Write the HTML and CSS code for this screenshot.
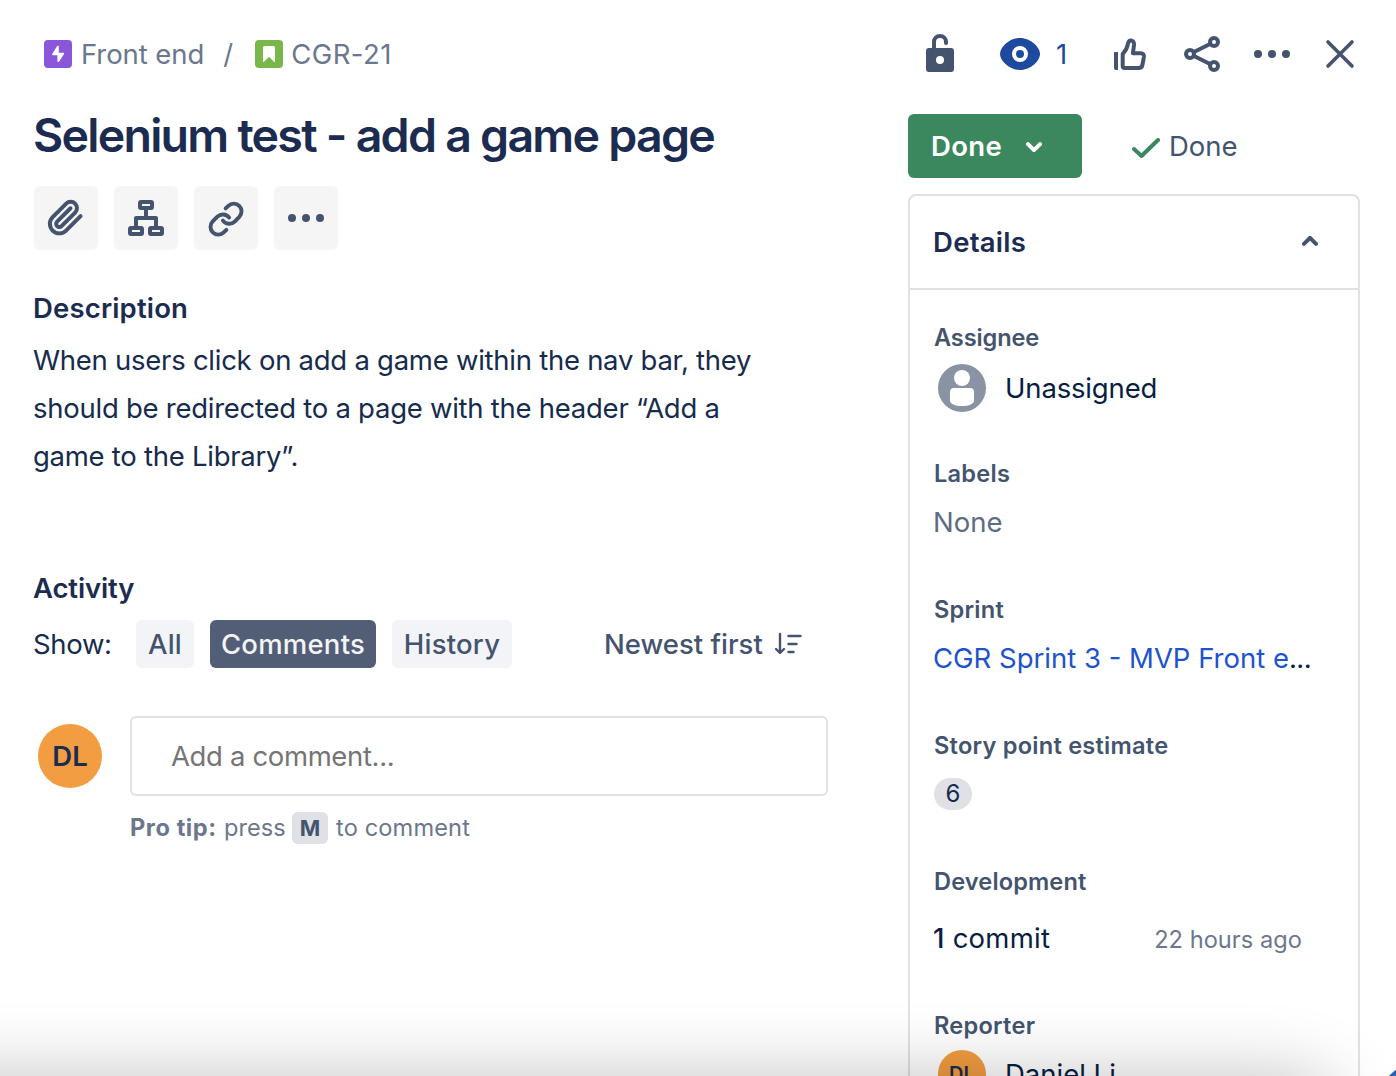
FILE: index.html
```html
<!DOCTYPE html>
<html lang="en">
<head>
<meta charset="utf-8">
<title>CGR-21 Selenium test - add a game page</title>
<link rel="stylesheet" href="styles.css">
</head>
<body>
<div class="issue">
  <main class="main">
    <nav class="crumbs">
      <svg class="type" viewBox="0 0 28 28"><rect width="28" height="28" rx="4" fill="#8a57da"/><path d="M14.8 6.6v6.2h4.6c.7 0 .9.5.6 1.100l-4.800 7.700c-.5.800-1.800.600-1.800-.500V15.200H8.800c-.7 0-.9-.5-.6-1.100L13 6.300c.5-.8 1.800-.6 1.800.3z" fill="#fff"/></svg>
      <a class="t-crumb">Front end</a>
      <span class="slash">/</span>
      <svg class="type" viewBox="0 0 28 28"><rect width="28" height="28" rx="4" fill="#79b74b"/><path d="M9.500 6h9A1.500 1.500 0 0 1 20 7.500V21.500c0 .6-.6.700-1 .300l-5-5-5 5c-.4.400-1 .3-1-.3V7.500A1.500 1.500 0 0 1 9.500 6z" fill="#fff"/></svg>
      <a class="t-key">CGR-21</a>
    </nav>
    <h1>Selenium test - add a game page</h1>
    <div class="tools">
      <button><svg viewBox="0 0 64 64"><path transform="translate(12.700 12.600) scale(1.58)" stroke-width="2.500" d="m21.440 11.050-9.190 9.190a6 6 0 0 1-8.490-8.490l8.570-8.570A4 4 0 1 1 18 8.840l-8.590 8.570a2 2 0 0 1-2.830-2.830l8.490-8.480"/></svg></button>
      <button><svg viewBox="0 0 64 64"><rect x="26" y="16" width="12" height="6" rx="1"/><rect x="16" y="42" width="12" height="6" rx="1"/><rect x="36" y="42" width="12" height="6" rx="1"/><path d="M32 23v9M22 42V32h20v10" stroke-linecap="butt"/></svg></button>
      <button><svg viewBox="0 0 64 64"><path transform="translate(13.300 14.400) scale(1.56)" stroke-width="2.500" d="M10 13a5 5 0 0 0 7.540.540l3-3a5 5 0 0 0-7.070-7.070l-1.720 1.710M14 11a5 5 0 0 0-7.540-.540l-3 3a5 5 0 0 0 7.070 7.070l1.710-1.710"/></svg></button>
      <button><svg viewBox="0 0 64 64"><g class="solid"><circle cx="18" cy="32" r="4"/><circle cx="32" cy="32" r="4"/><circle cx="46" cy="32" r="4"/></g></svg></button>
    </div>
    <h2 class="t-desc">Description</h2>
    <p class="body">When users click on add a game within the nav bar, they<br>should be redirected to a page with the header “Add a<br>game to the Library”.</p>
    <h2 class="t-act">Activity</h2>
    <div class="filters">
      <span class="show">Show:</span>
      <button class="pill p-all">All</button>
      <button class="pill p-com on">Comments</button>
      <button class="pill p-his">History</button>
      <button class="sort"><span>Newest first</span><svg viewBox="0 0 28 24"><path d="M6 2v18.500M2 17l4 4 4-4M14.500 4h12M14.500 12h8M14.500 20h5"/></svg></button>
    </div>
    <div class="comment">
      <span class="avatar">DL</span>
      <div class="entry">
        <div class="field-box"><span>Add a comment...</span></div>
        <div class="tip"><b>Pro tip:</b><span class="press">press</span><kbd>M</kbd><span class="to">to comment</span></div>
      </div>
    </div>
  </main>

  <aside class="side">
    <div class="actions">
      <svg viewBox="0 0 40 40"><path d="M14 15V8a6 6 0 0 1 12 0v1"/><path class="solid" fill-rule="evenodd" d="M9 14h22a3 3 0 0 1 3 3v18a3 3 0 0 1-3 3H9a3 3 0 0 1-3-3V17a3 3 0 0 1 3-3zM20 22a4 4 0 1 0 0 8 4 4 0 1 0 0-8z"/></svg>
      <span class="watch"><svg viewBox="0 0 40 40"><path d="M0 20C0 13.500 9 4 20 4s20 9.500 20 16-9 16-20 16S0 26.500 0 20z" fill="#1d4a9f" stroke="none"/><circle cx="20" cy="20" r="6" stroke="#fff"/></svg><span>1</span></span>
      <svg viewBox="0 0 40 40"><path class="solid" d="M5 18h3v18H6a2 2 0 0 1-2-2V19a1 1 0 0 1 1-1z"/><path d="M12.700 20v12a2 2 0 0 0 2 2h13.800c2.200 0 3.500-1 3.900-3l1.500-8c.3-2.200-.8-3.700-3-3.700h-8l1.100-8.300c.2-2.500-.8-4.500-2.900-4.600-2.100-.1-2.800 1.200-3.200 3.600-.5 3.800-1.600 6-5.200 10z"/></svg>
      <svg class="share" viewBox="0 0 40 40"><circle cx="8" cy="20" r="4"/><circle cx="32" cy="8" r="4"/><circle cx="32" cy="32" r="4"/><path d="M12 18l16-8M12 22l16 8"/></svg>
      <svg class="more" viewBox="0 0 40 40"><g class="solid"><circle cx="6" cy="20" r="4"/><circle cx="20" cy="20" r="4"/><circle cx="34" cy="20" r="4"/></g></svg>
      <svg class="close" viewBox="0 0 40 40"><path d="M8 8l24 24M32 8L8 32"/></svg>
    </div>
    <div class="status">
      <button class="done"><span>Done</span><svg viewBox="0 0 16 10"><path d="M2 2.200l6 6 6-6"/></svg></button>
      <span class="resolution"><svg viewBox="0 0 28 20"><path d="M2 11l7.500 7L26 2"/></svg><span>Done</span></span>
    </div>
    <section class="card">
      <header><h2>Details</h2><svg viewBox="0 0 16 10"><path d="M2 7.800l6-6 6 6"/></svg></header>
      <div class="rows">
        <h3 class="f-asg">Assignee</h3>
        <div class="value person"><svg class="face" viewBox="0 0 48 48"><circle cx="24" cy="24" r="24" fill="#8993a4"/><circle cx="24" cy="14" r="8" fill="#fff"/><path d="M16 24h16a4 4 0 0 1 4 4v8.500c0 3.500-5 5.500-12 5.500s-12-2-12-5.500V28a4 4 0 0 1 4-4z" fill="#fff"/></svg><span class="v-un">Unassigned</span></div>
        <h3>Labels</h3>
        <div class="value none">None</div>
        <h3>Sprint</h3>
        <div class="value link"><a>CGR Sprint 3 - MVP Front e</a><span>...</span></div>
        <h3>Story point estimate</h3>
        <div class="value"><span class="badge">6</span></div>
        <h3 class="f-dev">Development</h3>
        <div class="value dev"><span class="commit"><b>1</b> commit</span><time>22 hours ago</time></div>
        <h3>Reporter</h3>
        <div class="value person last"><span class="avatar small">DL</span><span>Daniel Li</span></div>
      </div>
    </section>
  </aside>
  <div class="toast"></div>
  <div class="bubble"></div>
</div>
</body>
</html>
```
FILE: styles.css
```css
* { box-sizing: border-box; }
body { margin: 0; background: #fff; color: #172b4d; font: 400 27.5px/40px Inter, "Liberation Sans", sans-serif; }
h1, h2, h3, p { margin: 0; }
button { border: 0; padding: 0; font: inherit; color: inherit; background: none; }
svg { display: block; flex: none; fill: none; stroke: #44546f; stroke-width: 4; stroke-linecap: round; stroke-linejoin: round; }
.solid { fill: #44546f; stroke: none; }
.issue { position: relative; display: flex; justify-content: space-between; width: 1396px; height: 1076px; padding: 34px 36px 0 33px; overflow: hidden; white-space: nowrap; }

.main { width: 795px; }
.crumbs { display: flex; align-items: center; height: 40px; padding-left: 11px; color: #6b778c; }
.type { width: 28px; height: 28px; stroke: none; }
.crumbs a { margin-left: 9px; }
.t-crumb { letter-spacing: -.003em; }
.crumbs .t-key { margin-left: 8px; letter-spacing: .016em; }
.slash { width: 51px; padding-left: 19px; }
h1 { margin-top: 31px; color: #1c2b50; font-size: 46.5px; font-weight: 600; line-height: 60px; letter-spacing: -.0375em; }
.tools { display: flex; gap: 16px; margin: 21px 0 0 1px; }
.tools button { width: 64px; height: 64px; border-radius: 6px; background: #f5f5f5; }
h2 { font-size: 27.5px; font-weight: 600; line-height: 40px; letter-spacing: .006em; color: #1c2b50; }
.t-desc { margin-top: 38px; }
.body { margin-top: 8px; line-height: 48px; letter-spacing: -.0095em; }
.t-act { margin-top: 88px; letter-spacing: -.005em; }
.filters { display: flex; align-items: center; height: 48px; margin-top: 12px; }
.show { width: 103px; letter-spacing: -.012em; }
.pill { height: 48px; margin-right: 16px; border-radius: 6px; background: #f3f4f7; color: #44546f; font-weight: 500; letter-spacing: .008em; }
.pill.on { background: #525e76; color: #f3f4f7; }
.p-all { width: 58px; }
.p-com { width: 166px; }
.p-his { width: 120px; }
.sort { display: flex; align-items: center; justify-content: space-between; width: 198px; margin-left: 76px; color: #44546f; font-weight: 500; }
.sort svg { width: 28px; height: 24px; stroke-width: 2.4; }
.comment { display: flex; margin: 48px 0 0 5px; }
.avatar { display: grid; place-items: center; flex: none; width: 64px; height: 64px; margin-top: 8px; border-radius: 50%; background: #f29d41; color: #1c2b50; font-weight: 600; }
.entry { flex: 1; margin-left: 28px; }
.field-box { height: 80px; padding: 18px 39px; border: 2px solid #dfe1e6; border-radius: 6px; color: #757575; letter-spacing: -.013em; }
.tip { display: flex; align-items: center; height: 32px; margin-top: 16px; color: #6b778c; font-size: 23.6px; }
.tip b { width: 94px; font-weight: 700; letter-spacing: .024em; }
.press { width: 68px; }
.to { letter-spacing: .006em; }
kbd { width: 36px; height: 32px; margin-right: 8px; border-radius: 6px; background: #dfe1e6; color: #44546f; font: 700 22px/32px Inter, sans-serif; text-align: center; }

.side { width: 452px; }
.actions { display: flex; height: 40px; padding-left: 12px; }
.actions svg { width: 40px; height: 40px; }
.watch { display: flex; width: 110px; margin-left: 40px; color: #1d4a9f; }
.watch span { margin-left: 16px; }
.share { margin-left: 32px; }
.more { margin-left: 30px; }
.close { margin-left: 28px; }
.close path { stroke-width: 3.6; }
.status { display: flex; align-items: center; height: 64px; margin-top: 40px; }
.done { display: flex; align-items: center; width: 174px; height: 64px; padding-left: 23px; border-radius: 6px; background: #3b875e; color: #fff; font-weight: 600; letter-spacing: .012em; }
.done svg { width: 16px; height: 10px; margin: 2px 0 0 24px; stroke: #fff; }
.resolution { display: flex; align-items: center; margin-left: 50px; color: #44546f; }
.resolution svg { width: 28px; height: 20px; margin-top: 3px; stroke: #3b875e; }
.resolution span { margin-left: 9px; }
.card { height: 940px; margin-top: 16px; border: 2px solid #dfe1e6; border-radius: 8px; }
.card header { display: flex; align-items: center; justify-content: space-between; height: 94px; padding: 0 40px 0 23px; border-bottom: 2px solid #dfe1e6; }
.card header h2 { letter-spacing: .01em; }
.card header svg { width: 16px; height: 10px; margin-top: -2px; }
.rows { padding: 30px 0 0 24px; }
h3 { color: #44546f; font-size: 23.6px; font-weight: 600; line-height: 36px; letter-spacing: .01em; }
.f-asg { letter-spacing: -.006em; }
.f-dev { letter-spacing: .005em; }
.value { display: flex; align-items: center; height: 60px; margin-bottom: 40px; color: #091e42; }
.person { height: 64px; margin-bottom: 36px; padding-left: 4px; }
.last { height: 60px; }
.face { width: 48px; height: 48px; stroke: none; }
.person > span:last-child { margin-left: 19px; }
.v-un { letter-spacing: -.006em; }
.none, .link, .dev { margin-left: -1px; }
.none { color: #5e6c84; }
.link a { color: #1d53cc; }
.link span { letter-spacing: -.02em; }
.badge { width: 38px; height: 32px; border-radius: 16px; background: #dfe1e6; color: #172b4d; font-size: 24px; line-height: 32px; text-align: center; }
.dev { justify-content: space-between; height: 76px; margin-bottom: 32px; padding-right: 56px; }
.commit { letter-spacing: .009em; }
.commit b { font-weight: 500; }
time { margin-top: 3px; color: #6b778c; font-size: 23.6px; letter-spacing: .002em; }
.small { width: 48px; height: 48px; margin: 0; font-size: 20px; }

/* Drop shadow rising from the panel docked below the fold, and the help bubble beside it */
.toast { position: absolute; left: -200px; top: 1076px; width: 1534px; height: 300px; border-radius: 40px; box-shadow: 0 0 72px rgba(0, 0, 0, .24); }
.bubble { position: absolute; left: 1373px; top: 1059px; width: 112px; height: 112px; border-radius: 50%; background: #2b5fae; }
```
